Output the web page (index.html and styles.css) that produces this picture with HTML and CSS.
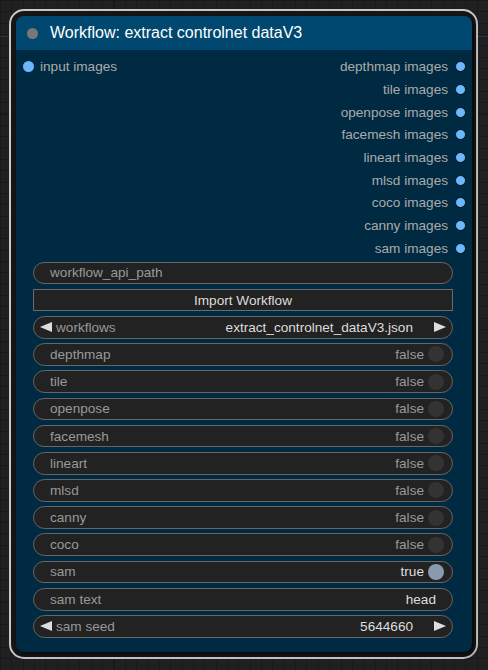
FILE: index.html
```html
<!DOCTYPE html>
<html>
<head>
<meta charset="utf-8">
<link rel="stylesheet" href="styles.css">
</head>
<body>
<div class="outline">
  <div class="node">
    <div class="title">
      <span class="title-dot"></span>
      <span class="title-text">Workflow: extract controlnet dataV3</span>
    </div>
    <div class="body">
      <div class="slots">
        <div class="slot-row"><span class="in"><span class="dot in-dot"></span>input images</span><span class="out">depthmap images<span class="dot"></span></span></div>
        <div class="slot-row"><span></span><span class="out">tile images<span class="dot"></span></span></div>
        <div class="slot-row"><span></span><span class="out">openpose images<span class="dot"></span></span></div>
        <div class="slot-row"><span></span><span class="out">facemesh images<span class="dot"></span></span></div>
        <div class="slot-row"><span></span><span class="out">lineart images<span class="dot"></span></span></div>
        <div class="slot-row"><span></span><span class="out">mlsd images<span class="dot"></span></span></div>
        <div class="slot-row"><span></span><span class="out">coco images<span class="dot"></span></span></div>
        <div class="slot-row"><span></span><span class="out">canny images<span class="dot"></span></span></div>
        <div class="slot-row"><span></span><span class="out">sam images<span class="dot"></span></span></div>
      </div>
      <div class="widgets">
        <div class="w text-w"><span class="label">workflow_api_path</span></div>
        <div class="button">Import Workflow</div>
        <div class="w combo"><span class="arrow-l"></span><span class="label">workflows</span><span class="value">extract_controlnet_dataV3.json</span><span class="arrow-r"></span></div>
        <div class="w toggle"><span class="label">depthmap</span><span class="tval">false</span><span class="knob"></span></div>
        <div class="w toggle"><span class="label">tile</span><span class="tval">false</span><span class="knob"></span></div>
        <div class="w toggle"><span class="label">openpose</span><span class="tval">false</span><span class="knob"></span></div>
        <div class="w toggle"><span class="label">facemesh</span><span class="tval">false</span><span class="knob"></span></div>
        <div class="w toggle"><span class="label">lineart</span><span class="tval">false</span><span class="knob"></span></div>
        <div class="w toggle"><span class="label">mlsd</span><span class="tval">false</span><span class="knob"></span></div>
        <div class="w toggle"><span class="label">canny</span><span class="tval">false</span><span class="knob"></span></div>
        <div class="w toggle"><span class="label">coco</span><span class="tval">false</span><span class="knob"></span></div>
        <div class="w toggle on"><span class="label">sam</span><span class="tval">true</span><span class="knob"></span></div>
        <div class="w text-w"><span class="label">sam text</span><span class="tv">head</span></div>
        <div class="w combo"><span class="arrow-l"></span><span class="label">sam seed</span><span class="value">5644660</span><span class="arrow-r"></span></div>
      </div>
    </div>
  </div>
</div>
</body>
</html>
```

FILE: styles.css
```css
html, body {
  margin: 0;
  padding: 0;
}
body {
  width: 488px;
  height: 670px;
  overflow: hidden;
  font-family: "Liberation Sans", Arial, sans-serif;
  background-color: #202020;
  background-image:
    linear-gradient(to bottom, transparent 36px, #26344c 36px, #26344c 37px, transparent 37px),
    repeating-linear-gradient(to right, #191919 0, #191919 1px, transparent 1px, transparent 11.35px),
    repeating-linear-gradient(to bottom, #191919 0, #191919 1px, transparent 1px, transparent 11.35px);
}
.outline {
  margin: 9px 0 0 9px;
  border: 2px solid #c8c8c8;
  border-radius: 15px;
  padding: 5px 4px 5px 5px;
  box-sizing: content-box;
  width: 456px;
  height: 636px;
  background: #161616;
}
.node {
  width: 456px;
  height: 636px;
  border-radius: 8px;
  background: #002a42;
  overflow: hidden;
  box-shadow: 2px 2px 5px rgba(0, 0, 0, 0.7);
  display: flex;
  flex-direction: column;
}
.title {
  height: 34px;
  background: #00486f;
  display: flex;
  align-items: center;
  padding-left: 11px;
  flex: none;
}
.title-dot {
  width: 11px;
  height: 11px;
  border-radius: 50%;
  background: #777;
}
.title-text {
  margin-left: 12px;
  color: #fff;
  font-size: 16px;
  line-height: 34px;
}
.body {
  padding-top: 5.4px;
}
.slots {
  display: flex;
  flex-direction: column;
}
.slot-row {
  height: 22.7px;
  display: flex;
  justify-content: space-between;
  align-items: center;
  font-size: 13.6px;
  color: #aaa;
}
.in {
  display: flex;
  align-items: center;
  padding-left: 7px;
}
.out {
  display: flex;
  align-items: center;
  padding-right: 6px;
}
.dot {
  width: 9px;
  height: 9px;
  border-radius: 50%;
  background: #6cb8ff;
  border: 1px solid #0a0f16;
  margin-left: 7px;
}
.in .in-dot {
  margin-left: 0;
  margin-right: 6px;
  border-color: transparent;
}
.widgets {
  margin-top: 2px;
  padding: 0 19px 0 17px;
  display: flex;
  flex-direction: column;
  gap: 4.5px;
}
.w, .button {
  height: 22.7px;
  box-sizing: border-box;
  background: #222;
  border: 1px solid #666;
  display: flex;
  align-items: center;
  font-size: 13.6px;
  color: #999;
}
.w {
  border-radius: 12px;
  padding: 0 16px;
}
.button {
  justify-content: center;
  color: #ddd;
  border-color: #6a6a6a;
}
.label {
  flex: 1;
  white-space: nowrap;
}
.tv, .value, .tval {
  color: #ddd;
  white-space: nowrap;
}
.combo {
  padding: 0 6px 0 6px;
}
.combo .label {
  margin-left: 4px;
}
.combo .value {
  margin-right: 21px;
}
.arrow-l {
  width: 0;
  height: 0;
  border-top: 5.5px solid transparent;
  border-bottom: 5.5px solid transparent;
  border-right: 12px solid #ddd;
}
.arrow-r {
  width: 0;
  height: 0;
  border-top: 5.5px solid transparent;
  border-bottom: 5.5px solid transparent;
  border-left: 12px solid #ddd;
}
.toggle {
  padding-right: 8px;
}
.toggle .tval {
  color: #999;
}
.toggle.on .tval {
  color: #ddd;
}
.knob {
  width: 16px;
  height: 16px;
  border-radius: 50%;
  background: #333;
  margin-left: 4px;
}
.toggle.on .knob {
  background: #8a9bb0;
}
```
